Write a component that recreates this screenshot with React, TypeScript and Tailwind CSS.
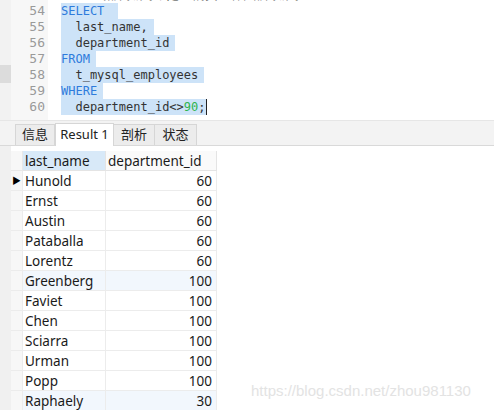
import React from 'react';

type Tok = { t: string; c?: 'kw' | 'num' };

const codeLines: { n: number; toks: Tok[]; sel: boolean; pad?: string; cursor?: boolean }[] = [
  { n: 53, toks: [{ t: '-- 查询部门编号不是90的员工名和部门编号' }], sel: false },
  { n: 54, toks: [{ t: 'SELECT', c: 'kw' }], sel: true, pad: 'pr-[14px]' },
  { n: 55, toks: [{ t: '  last_name,' }], sel: true },
  { n: 56, toks: [{ t: '  department_id' }], sel: true },
  { n: 57, toks: [{ t: 'FROM', c: 'kw' }], sel: true },
  { n: 58, toks: [{ t: '  t_mysql_employees' }], sel: true },
  { n: 59, toks: [{ t: 'WHERE', c: 'kw' }], sel: true },
  { n: 60, toks: [{ t: '  department_id<>' }, { t: '90', c: 'num' }, { t: ';' }], sel: true, pad: 'pr-0', cursor: true },
];

const rows: [string, number, boolean][] = [
  ['Hunold', 60, false],
  ['Ernst', 60, false],
  ['Austin', 60, false],
  ['Pataballa', 60, false],
  ['Lorentz', 60, false],
  ['Greenberg', 100, true],
  ['Faviet', 100, false],
  ['Chen', 100, false],
  ['Sciarra', 100, false],
  ['Urman', 100, false],
  ['Popp', 100, false],
  ['Raphaely', 30, true],
];

const mono = { fontFamily: '"DejaVu Sans Mono", monospace' };

export default function App() {
  return (
    <div
      className="w-[494px] h-[410px] overflow-hidden bg-white relative"
      style={{ fontFamily: '"Noto Sans", "Noto Sans CJK SC", sans-serif' }}
    >
      {/* editor */}
      <div className="h-[120px] flex overflow-hidden">
        <div className="w-[48px] bg-[#f7f7f7] flex relative">
          <div className="w-[11px] bg-[#f2f2f2]" />
          <div className="absolute left-0 top-[65px] w-[11px] h-[18px] bg-[#dcdcdc]" />
        </div>
        <div className="flex-1 relative">
          <div className="-mt-[13px]">
            {codeLines.map((l) => (
              <div key={l.n} className="h-[16px] flex items-center text-[12px] leading-[16px]" style={mono}>
                <span className="absolute -left-[48px] w-[45px] text-right text-[#9a9a9a] text-[13px]">{l.n}</span>
                <span className="ml-[13px] flex">
                  <span className={l.sel ? `bg-[#cde3f8] ${l.pad ?? 'pr-[6px]'}` : 'text-[#b0b0b0]'}>
                    {l.toks.map((t, i) => (
                      <span
                        key={i}
                        className={
                          t.c === 'kw'
                            ? 'text-[#2e7bdc] whitespace-pre'
                            : t.c === 'num'
                            ? 'text-[#2fb44e] whitespace-pre'
                            : 'text-[#333] whitespace-pre'
                        }
                      >
                        {t.t}
                      </span>
                    ))}
                  </span>
                  {l.cursor && <span className="w-[1px] h-[16px] bg-[#222]" />}
                </span>
              </div>
            ))}
          </div>
        </div>
      </div>

      {/* tabs */}
      <div className="h-[5px] bg-[#f3f3f3] border-t border-[#e6e6e6]" />
      <div className="h-[21px] bg-[#f3f3f3] flex items-end pl-[15px] border-b border-[#d9d9d9] text-[13px] text-[#222]">
        <div className="h-[21px] w-[40px] bg-[#ececec] border border-[#d6d6d6] border-b-0 flex items-center justify-center">信息</div>
        <div className="h-[23px] -mb-px w-[59px] bg-white border border-[#d6d6d6] border-b-0 flex items-center justify-center">Result 1</div>
        <div className="h-[21px] w-[41px] bg-[#ececec] border border-[#d6d6d6] border-b-0 border-l-0 flex items-center justify-center">剖析</div>
        <div className="h-[21px] w-[42px] bg-[#ececec] border border-[#d6d6d6] border-b-0 border-l-0 flex items-center justify-center">状态</div>
      </div>

      {/* grid */}
      <div className="flex h-full">
        <div className="w-[11px] bg-[#f0f0f0]" />
        <div className="pt-[5px] text-[13.5px] text-[#1a1a1a]">
          <div className="flex h-[20px] leading-[21px]">
            <div className="w-[12px] bg-[#f7f7f7] border-b border-r border-[#e8e8e8]" />
            <div className="w-[83px] bg-[#d8e9f8] border-r border-b border-[#e4e4e4] pl-[2px]">last_name</div>
            <div className="w-[111px] bg-[#fafafa] border-r border-b border-[#e4e4e4] pl-[2px]">department_id</div>
          </div>
          {rows.map(([name, id, tint], i) => (
            <div key={name} className={`flex h-[20px] leading-[21px] ${tint ? 'bg-[#f2f7fd]' : 'bg-white'}`}>
              <div className="w-[12px] bg-[#f7f7f7] border-b border-r border-[#ececec] flex items-center justify-center text-[9px] text-black">
                {i === 0 ? '▶' : ''}
              </div>
              <div className="w-[83px] border-r border-b border-[#ececec] pl-[2px]">{name}</div>
              <div className="w-[111px] border-r border-b border-[#ececec] pr-[4px] text-right">{id}</div>
            </div>
          ))}
        </div>
      </div>

      <div
        className="absolute left-[251px] top-[380px] text-[15px] text-[#e3e3e3]"
        style={{ fontFamily: '"Liberation Sans", Arial, sans-serif' }}
      >
        https://blog.csdn.net/zhou981130
      </div>
    </div>
  );
}
